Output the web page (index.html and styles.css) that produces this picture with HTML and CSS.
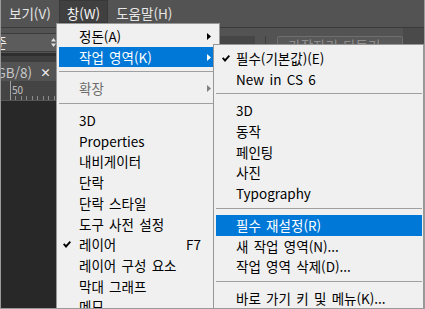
FILE: index.html
```html
<!DOCTYPE html>
<html lang="ko">
<head>
<meta charset="utf-8">
<link rel="stylesheet" href="styles.css">
</head>
<body>
<div class="frame">
  <div class="menubar">
    <span class="mb-item">보기(V)</span>
    <span class="mb-item active">창(W)</span>
    <span class="mb-item">도움말(H)</span>
  </div>
  <div class="optbar">
    <div class="preset">
      <span class="preset-text">표준</span>
      <svg class="updown" width="5" height="9" viewBox="0 0 5 9"><polygon points="2.5,0 5,3.5 0,3.5" fill="#e0e0e0"/><polygon points="0,5.5 5,5.5 2.5,9" fill="#e0e0e0"/></svg>
    </div>
    <div class="opt-box"></div>
    <div class="opt-sep"></div>
    <div class="opt-btn">가장자리 다듬기...</div>
    <div class="opt-rest"></div>
  </div>
  <div class="tabrow">
    <div class="doctab"><span class="doctab-text">제목 없음-1 @ 50%(RGB/8)</span><span class="doctab-close">×</span></div>
  </div>
  <div class="ruler"><span class="ruler-num">50</span></div>
  <div class="canvas"></div>

  <div class="menu main-menu">
    <div class="item"><span class="label">정돈(A)</span><svg class="arrow" width="4" height="7" viewBox="0 0 4 7"><polygon points="0,0 4,3.5 0,7"/></svg></div>
    <div class="item hl"><span class="label">작업 영역(K)</span><svg class="arrow" width="4" height="7" viewBox="0 0 4 7"><polygon points="0,0 4,3.5 0,7"/></svg></div>
    <div class="sep"></div>
    <div class="item disabled"><span class="label">확장</span><svg class="arrow" width="4" height="7" viewBox="0 0 4 7"><polygon points="0,0 4,3.5 0,7"/></svg></div>
    <div class="sep"></div>
    <div class="item"><span class="label">3D</span></div>
    <div class="item"><span class="label">Properties</span></div>
    <div class="item"><span class="label">내비게이터</span></div>
    <div class="item"><span class="label">단락</span></div>
    <div class="item"><span class="label">단락 스타일</span></div>
    <div class="item"><span class="label">도구 사전 설정</span></div>
    <div class="item"><svg class="check" width="8" height="7" viewBox="0 0 8 7"><polygon points="0,3.6 1.4,2.2 3,3.9 6.7,0 8,1.3 3,6.9"/></svg><span class="label">레이어</span><span class="shortcut">F7</span></div>
    <div class="item"><span class="label">레이어 구성 요소</span></div>
    <div class="item"><span class="label">막대 그래프</span></div>
    <div class="item"><span class="label">메모</span></div>
  </div>

  <div class="menu sub-menu">
    <div class="item"><svg class="check" width="8" height="7" viewBox="0 0 8 7"><polygon points="0,3.6 1.4,2.2 3,3.9 6.7,0 8,1.3 3,6.9"/></svg><span class="label">필수(기본값)(E)</span></div>
    <div class="item"><span class="label">New in CS 6</span></div>
    <div class="sep"></div>
    <div class="item"><span class="label">3D</span></div>
    <div class="item"><span class="label">동작</span></div>
    <div class="item"><span class="label">페인팅</span></div>
    <div class="item"><span class="label">사진</span></div>
    <div class="item"><span class="label">Typography</span></div>
    <div class="sep"></div>
    <div class="item hl"><span class="label">필수 재설정(R)</span></div>
    <div class="item"><span class="label">새 작업 영역(N)...</span></div>
    <div class="item"><span class="label">작업 영역 삭제(D)...</span></div>
    <div class="sep"></div>
    <div class="item"><span class="label">바로 가기 키 및 메뉴(K)...</span></div>
  </div>
</div>
</body>
</html>
```
FILE: styles.css
```css
html, body {
  margin: 0;
  padding: 0;
  background: #535353;
}

.frame {
  position: relative;
  width: 425px;
  height: 309px;
  box-sizing: border-box;
  border: 1px solid #9a9a9a;
  border-top: none;
  overflow: hidden;
  display: flex;
  flex-direction: column;
  background: #282828;
  font-family: "Noto Sans CJK KR", "Noto Sans", sans-serif;
  font-size: 13.5px;
  word-spacing: 1.5px;
}

/* top menu bar */
.menubar {
  height: 27px;
  flex: none;
  display: flex;
  align-items: flex-start;
  background: #535353;
}
.mb-item {
  height: 23px;
  box-sizing: border-box;
  padding: 3px 8px 0;
  line-height: 20px;
  color: #e6e6e6;
  white-space: nowrap;
}
.mb-item.active {
  background: #404040;
  color: #f4f4f4;
  box-shadow: inset 0 0 0 1px #383838;
}

/* options bar */
.optbar {
  height: 25px;
  flex: none;
  display: flex;
  align-items: flex-start;
  background: #535353;
  border-top: 1px solid #3a3a3a;
  border-bottom: 3px solid #2e2e2e;
}
.preset {
  width: 56px;
  height: 17px;
  margin-top: 5px;
  flex: none;
  display: flex;
  align-items: center;
  overflow: hidden;
  background: #5c5c5c;
  border-top: 1px solid #3c3c3c;
  border-bottom: 1px solid #3c3c3c;
}
.preset-text {
  flex: none;
  margin-left: -19px;
  color: #f0f0f0;
  line-height: 17px;
}
.updown {
  margin-left: auto;
  margin-right: 1px;
}
.opt-box {
  flex: none;
  width: 40px;
  height: 17px;
  margin: 8px 0 0 158px;
  background: #464646;
}
.opt-sep {
  flex: none;
  width: 1px;
  height: 18px;
  margin: 8px 0 0 10px;
  background: #3c3c3c;
}
.opt-btn {
  flex: none;
  width: 126px;
  height: 18px;
  margin: 8px 0 0 11px;
  box-sizing: border-box;
  border: 1px solid #6e6e6e;
  border-radius: 2px;
  background: #585858;
  color: #8e8e8e;
  text-align: center;
  line-height: 16px;
  white-space: nowrap;
  overflow: hidden;
}
.opt-rest {
  flex: 1;
  align-self: stretch;
  background: #4a4a4a;
}

/* document tab */
.tabrow {
  height: 25px;
  flex: none;
  display: flex;
  align-items: flex-end;
  background: #3e3e3e;
}
.doctab {
  width: 56px;
  height: 19px;
  display: flex;
  align-items: center;
  justify-content: flex-end;
  overflow: hidden;
  background: #535353;
  padding-right: 6px;
  box-sizing: border-box;
}
.doctab-text {
  flex: none;
  color: #c8c8c8;
  white-space: nowrap;
}
.doctab-close {
  flex: none;
  margin-left: 8px;
  color: #f0f0f0;
  font-weight: bold;
  font-size: 11px;
}

/* ruler */
.ruler {
  height: 19px;
  flex: none;
  background:
    linear-gradient(#a0a0a0, #a0a0a0) 9px 0 / 1px 100% no-repeat,
    repeating-linear-gradient(to right, #8a8a8a 0 1px, transparent 1px 5.5px) 9px 100% / 100% 4px no-repeat,
    #444444;
  border-bottom: 1px solid #555555;
}
.ruler-num {
  display: block;
  padding: 4px 0 0 11px;
  font-size: 10px;
  line-height: 10px;
  color: #c4c4c4;
}

.canvas {
  flex: 1;
  background: #282828;
}

/* drop-down menus */
.menu {
  position: absolute;
  box-sizing: border-box;
  background: #f0f0f0;
  border: 1px solid #979797;
  color: #000;
}
.main-menu {
  left: 55px;
  top: 23px;
  width: 164px;
  height: 300px;
  padding: 2px 2px;
}
.sub-menu {
  left: 212px;
  top: 44px;
  right: 0;
  height: 280px;
  padding: 3px 1px 3px 2px;
}
.item {
  position: relative;
  height: 20.7px;
  display: flex;
  align-items: center;
  padding: 0 6px 0 20px;
  line-height: 20.7px;
  white-space: nowrap;
}
.item .arrow {
  margin-left: auto;
  fill: #000;
}
.item.hl {
  background: #0078d7;
  color: #fff;
}
.item.hl .arrow {
  fill: #fff;
}
.item.disabled {
  color: #6d6d6d;
}
.item.disabled .arrow {
  fill: #808080;
}
.check {
  position: absolute;
  left: 4px;
  top: 7px;
  fill: #000;
}
.sub-menu .check {
  left: 6px;
}
.shortcut {
  margin-left: auto;
  margin-right: 10px;
}
.sep {
  height: 1px;
  margin: 4px 0 6px;
  background: #a0a0a0;
}
```
